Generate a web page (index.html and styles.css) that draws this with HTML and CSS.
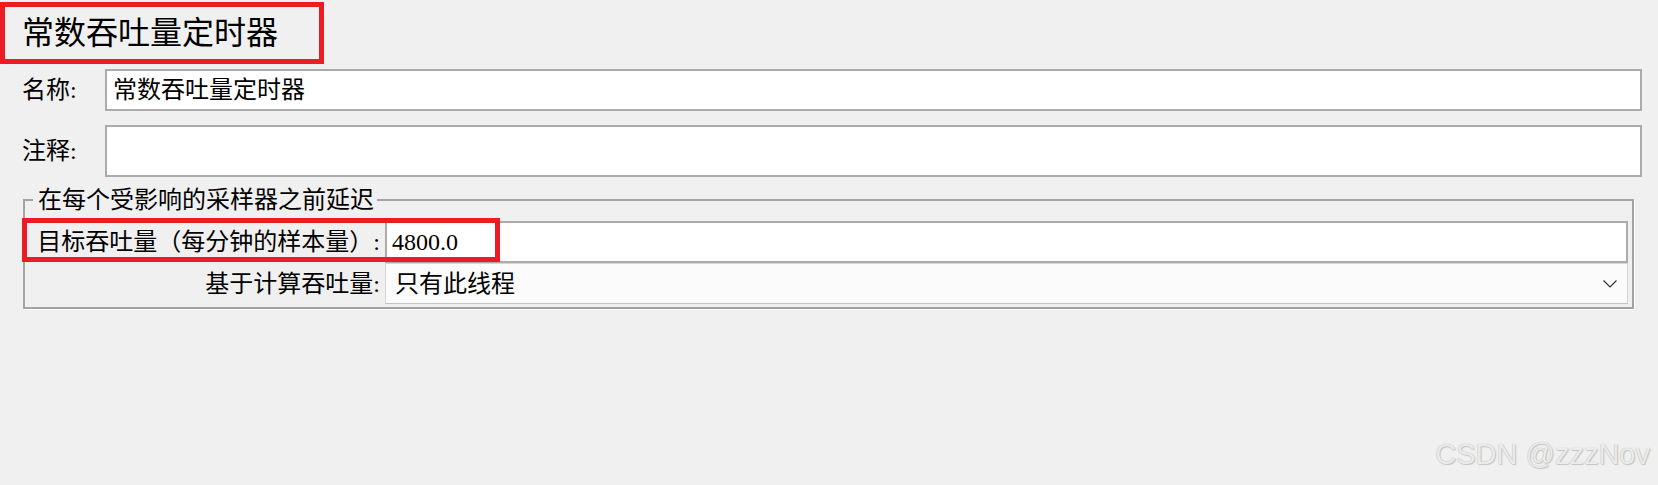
FILE: index.html
```html
<!DOCTYPE html>
<html lang="zh">
<head>
<meta charset="utf-8">
<title>常数吞吐量定时器</title>
<link rel="stylesheet" href="styles.css">
</head>
<body>
<div class="page">
  <div class="title">常数吞吐量定时器</div>
  <div class="form">
    <div class="row name">
      <div class="lbl">名称:</div>
      <div class="field">常数吞吐量定时器</div>
    </div>
    <div class="row comment">
      <div class="lbl">注释:</div>
      <div class="field"></div>
    </div>
  </div>
  <fieldset class="group">
    <legend>在每个受影响的采样器之前延迟</legend>
    <div class="grid">
      <div class="glabel">目标吞吐量（每分钟的样本量）:</div>
      <div class="gfield">4800.0</div>
      <div class="glabel">基于计算吞吐量:</div>
      <div class="combo">
        <span>只有此线程</span>
        <svg class="chev" width="14" height="8" viewBox="0 0 14 8"><polyline points="0.5,0.5 7,7 13.5,0.5" fill="none" stroke="#333" stroke-width="1.2"/></svg>
      </div>
      <span class="mark"></span>
    </div>
  </fieldset>
  <div class="wm">CSDN @zzzNov</div>
</div>
</body>
</html>
```

FILE: styles.css
```css
html, body {
  margin: 0;
  padding: 0;
  background: #f0f0f0;
}
body {
  font-family: "Liberation Serif", "Noto Sans CJK SC", serif;
  color: #000;
}
.page {
  position: relative;
  min-height: 485px;
  overflow: hidden;
}
.title {
  box-sizing: border-box;
  margin-top: 2px;
  width: 324px;
  height: 62px;
  border: 5px solid #ed1c24;
  padding-left: 17px;
  font-size: 32px;
  display: flex;
  align-items: center;
  line-height: 1;
}
.form {
  margin: 5px 16px 0 22px;
}
.row {
  display: flex;
  align-items: center;
}
.row.name { height: 42px; }
.row.comment { height: 52px; margin-top: 14px; }
.lbl {
  width: 83px;
  font-size: 24px;
  line-height: 1;
  flex: none;
}
.field {
  box-sizing: border-box;
  flex: 1;
  height: 100%;
  background: #fff;
  border: 2px solid #ababab;
  padding-left: 6px;
  font-size: 24px;
  display: flex;
  align-items: center;
  line-height: 1;
}
.group {
  margin: 9px 24px 0 23px;
  padding: 0 4px 3px 3px;
  border: 2px solid #a3a3a3;
  box-shadow: 1px 1px 0 #fff;
  min-width: 0;
}
.group legend {
  font-size: 24px;
  line-height: 28px;
  padding: 0 3px 0 5px;
  margin-left: 5px;
}
.grid {
  position: relative;
  margin-top: 7px;
  display: grid;
  grid-template-columns: 357px 1fr;
  grid-template-rows: 42px 41px;
}
.glabel {
  font-size: 24px;
  line-height: 1;
  text-align: right;
  align-self: center;
  white-space: nowrap;
  padding-right: 5px;
}
.gfield {
  box-sizing: border-box;
  background: #fff;
  border: 2px solid #ababab;
  padding-left: 5px;
  font-size: 24px;
  line-height: 1;
  display: flex;
  align-items: center;
}
.combo {
  box-sizing: border-box;
  background: #fbfbfb;
  border: 1px solid #d6d6d6;
  border-bottom-color: #c2c2c2;
  padding: 0 10px 0 9px;
  font-size: 24px;
  line-height: 1;
  display: flex;
  align-items: center;
  justify-content: space-between;
}
.chev { display: block; }
.mark {
  position: absolute;
  left: -6px;
  top: -3px;
  width: 478px;
  height: 44px;
  box-sizing: border-box;
  border: 5px solid #ed1c24;
  pointer-events: none;
}
.wm {
  position: absolute;
  right: 8px;
  top: 440px;
  font-family: "Liberation Sans", sans-serif;
  font-size: 29px;
  line-height: 29px;
  color: #ebebeb;
  text-shadow: 0 0 1px #a8a8a8, 1px 1px 1px #c8c8c8;
  white-space: nowrap;
}
```
